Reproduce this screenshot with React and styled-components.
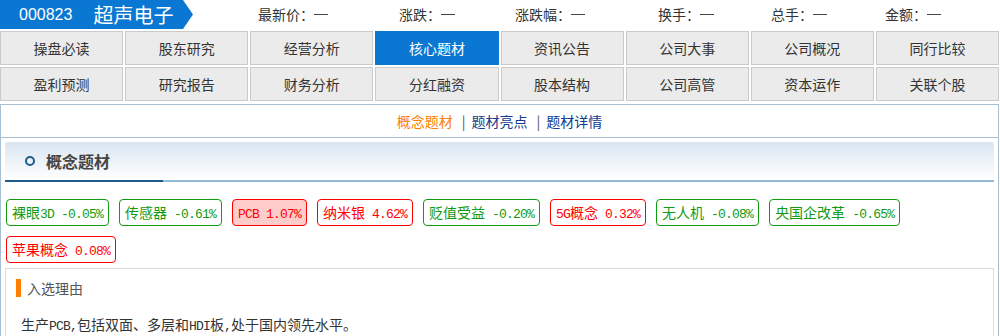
import React from "react";
import styled, { createGlobalStyle } from "styled-components";

const Global = createGlobalStyle`
  html, body { margin: 0; padding: 0; background: #fff; }
  body {
    font-family: "Noto Sans CJK SC", "Liberation Sans", sans-serif;
    color: #333;
    font-size: 14px;
    width: 1000px;
    overflow: hidden;
  }
`;

const Page = styled.div`
  width: 1000px;
  height: 336px;
  overflow: hidden;
`;

const TopBar = styled.div`
  display: flex;
  align-items: center;
  height: 29px;
  margin-bottom: 2px;
`;

const Banner = styled.div`
  flex: none;
  width: 193px;
  height: 29px;
  background: #0a78d2;
  color: #fff;
  display: flex;
  align-items: center;
  padding-left: 19px;
  box-sizing: border-box;
  clip-path: polygon(0 0, 183px 0, 193px 50%, 183px 100%, 0 100%);
`;

const Code = styled.span`
  font-family: "Liberation Sans", Arial, sans-serif;
  font-size: 16px;
  line-height: 29px;
  margin-right: 21px;
`;

const Name = styled.span`
  font-size: 20px;
  line-height: 29px;
`;

const Stats = styled.div`
  display: grid;
  grid-template-columns: 141px 116px 143px 113px 114px auto;
  margin-left: 65px;
`;

const Stat = styled.span`
  display: flex;
  align-items: center;
  font-size: 14px;
  line-height: 29px;
  color: #333;
  white-space: nowrap;
`;

const Colon = styled.span`
  display: inline-block;
  width: 14px;
`;

const Dash = styled.span`
  display: inline-block;
  width: 14px;
  height: 1px;
  background: #444;
`;

const NavGrid = styled.div`
  display: grid;
  grid-template-columns: repeat(8, 1fr);
  gap: 2px;
  width: 999px;
  margin-bottom: 3px;
`;

const NavCell = styled.div`
  height: 34px;
  box-sizing: border-box;
  border: 1px solid ${(p) => (p.$active ? "#0a78d2" : "#cacaca")};
  background: ${(p) => (p.$active ? "#0a78d2" : "#ebebeb")};
  color: ${(p) => (p.$active ? "#fff" : "#333")};
  font-size: 14px;
  line-height: 32px;
  text-align: center;
`;

const Panel = styled.div`
  width: 999px;
  box-sizing: border-box;
  border: 1px solid #a6bfd3;
  border-bottom: none;
  min-height: 240px;
`;

const SubTabs = styled.div`
  height: 32px;
  border-bottom: 1px solid #a6bfd3;
  display: flex;
  justify-content: center;
  align-items: center;
  font-size: 14px;
  line-height: 32px;
`;

const SubTab = styled.span`
  color: ${(p) => (p.$active ? "#ff7f00" : "#113b8e")};
`;

const Sep = styled.span`
  color: #555;
  margin: 0 6px 0 9px;
`;

const Content = styled.div`
  padding: 0 4px;
`;

const SectionHead = styled.div`
  margin-top: 4px;
  height: 38px;
  background: linear-gradient(to bottom, #dae5f1, #ffffff);
  border-radius: 3px 3px 0 0;
  display: flex;
  align-items: center;
  padding-left: 20px;
`;

const Ring = styled.span`
  width: 10px;
  height: 10px;
  box-sizing: border-box;
  border: 2px solid #1d5b8a;
  border-radius: 50%;
  margin-right: 11px;
`;

const HeadTitle = styled.span`
  font-size: 16px;
  font-weight: bold;
  color: #444;
  line-height: 38px;
`;

const Underline = styled.div`
  height: 2px;
  background: linear-gradient(to right, #1d5b8a 158px, #93bbd8 158px);
`;

const Tags = styled.div`
  margin-top: 17px;
  display: flex;
  flex-wrap: wrap;
  column-gap: 10px;
  row-gap: 10px;
  padding-left: 1px;
`;

const Tag = styled.span`
  height: 27px;
  box-sizing: border-box;
  border: 1px solid ${(p) => (p.$up ? "#ff0000" : "#129a12")};
  color: ${(p) => (p.$up ? "#ff0000" : "#129a12")};
  background: ${(p) => (p.$hl ? "#ffcccc" : "#fff")};
  border-radius: 4px;
  padding: 0 5px;
  font-size: 14px;
  line-height: 25px;
  white-space: nowrap;
`;

const Latin = styled.span`
  font-family: "Liberation Mono", monospace;
  font-size: 13px;
  letter-spacing: -0.8px;
`;

const Reason = styled.div`
  margin-top: 5px;
  border: 1px solid #dcdcdc;
  padding: 10px 10px 0 10px;
  height: 80px;
`;

const ReasonTitle = styled.div`
  display: flex;
  align-items: center;
  height: 18px;
  font-size: 14px;
  color: #555;
`;

const Bar = styled.span`
  width: 5px;
  height: 18px;
  background: #ff8000;
  margin-right: 6px;
`;

const ReasonText = styled.div`
  margin-top: 18px;
  padding-left: 5px;
  font-size: 14px;
  line-height: 18px;
  color: #333;
`;

const navItems = [
  "操盘必读", "股东研究", "经营分析", "核心题材", "资讯公告", "公司大事", "公司概况", "同行比较",
  "盈利预测", "研究报告", "财务分析", "分红融资", "股本结构", "公司高管", "资本运作", "关联个股",
];

const stats = ["最新价", "涨跌", "涨跌幅", "换手", "总手", "金额"];

const tags = [
  { name: "裸眼3D", v: "-0.05%", up: false },
  { name: "传感器", v: "-0.61%", up: false },
  { name: "PCB", v: "1.07%", up: true, hl: true },
  { name: "纳米银", v: "4.62%", up: true },
  { name: "贬值受益", v: "-0.20%", up: false },
  { name: "5G概念", v: "0.32%", up: true },
  { name: "无人机", v: "-0.08%", up: false },
  { name: "央国企改革", v: "-0.65%", up: false },
  { name: "苹果概念", v: "0.08%", up: true },
];

function Mixed({ text }) {
  const parts = text.split(/([\x20-\x7e]+)/).filter(Boolean);
  return parts.map((p, i) =>
    /^[\x20-\x7e]+$/.test(p) ? <Latin key={i}>{p}</Latin> : <React.Fragment key={i}>{p}</React.Fragment>
  );
}

export default function App() {
  return (
    <Page>
      <Global />
      <TopBar>
        <Banner>
          <Code>000823</Code>
          <Name>超声电子</Name>
        </Banner>
        <Stats>
          {stats.map((s) => (
            <Stat key={s}>
              {s}
              <Colon>：</Colon>
              <Dash />
            </Stat>
          ))}
        </Stats>
      </TopBar>
      <NavGrid>
        {navItems.map((n) => (
          <NavCell key={n} $active={n === "核心题材"}>{n}</NavCell>
        ))}
      </NavGrid>
      <Panel>
        <SubTabs>
          <SubTab $active>概念题材</SubTab>
          <Sep>|</Sep>
          <SubTab>题材亮点</SubTab>
          <Sep>|</Sep>
          <SubTab>题材详情</SubTab>
        </SubTabs>
        <Content>
          <SectionHead>
            <Ring />
            <HeadTitle>概念题材</HeadTitle>
          </SectionHead>
          <Underline />
          <Tags>
            {tags.map((t) => (
              <Tag key={t.name} $up={t.up} $hl={t.hl}>
                <Mixed text={`${t.name} ${t.v}`} />
              </Tag>
            ))}
          </Tags>
          <Reason>
            <ReasonTitle>
              <Bar />
              入选理由
            </ReasonTitle>
            <ReasonText>
              <Mixed text="生产PCB,包括双面、多层和HDI板,处于国内领先水平。" />
            </ReasonText>
          </Reason>
        </Content>
      </Panel>
    </Page>
  );
}
